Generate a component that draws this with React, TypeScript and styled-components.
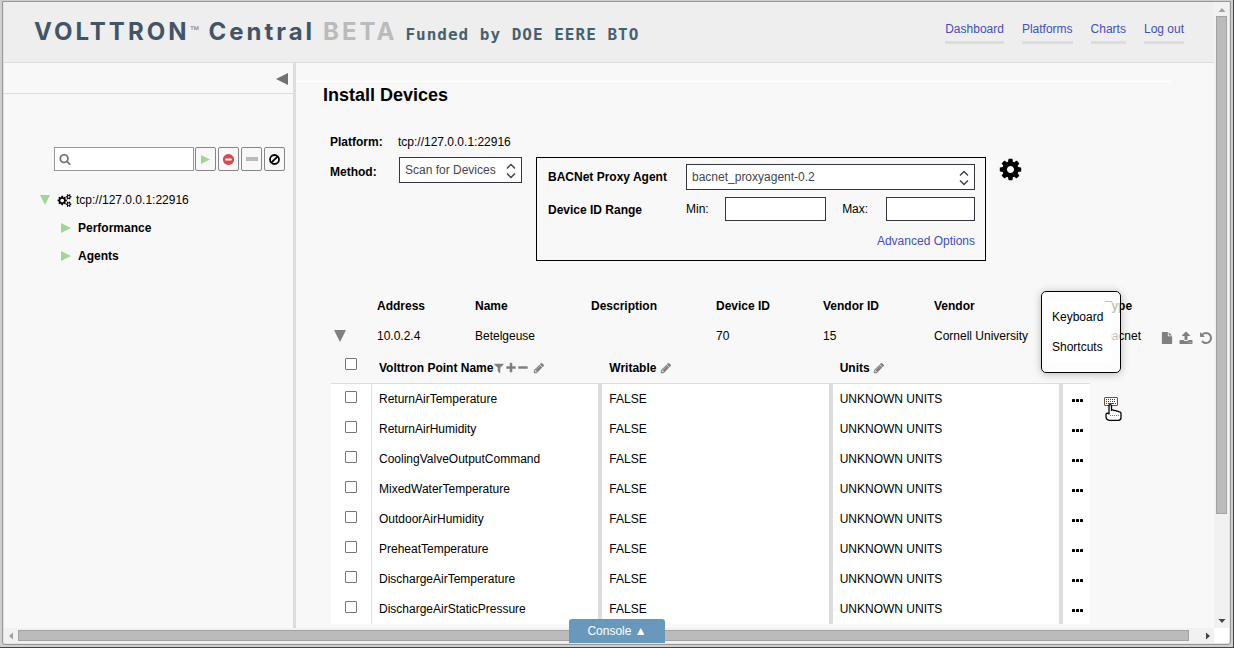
import React from "react";
import styled, { createGlobalStyle } from "styled-components";

const GlobalStyle = createGlobalStyle`
  * { box-sizing: border-box; }
  body {
    margin: 0;
    background: #f8f8f8;
    color: #000;
    font: 12px/20px "Liberation Sans", Arial, sans-serif;
  }
  button, input, select { font: inherit; color: inherit; }
  a { color: #424fbf; text-decoration: none; }
`;

/* ---------- window frame and scroll bars ---------- */

const WindowFrame = styled.div`
  height: 100vh;
  padding: 1px 2px 2px;
  background: #cfcfcf;
  border: solid #444;
  border-width: 0 1px 1px 0;
`;

const WindowBody = styled.div`
  height: 100%;
  display: grid;
  grid-template-columns: minmax(0, 1fr) 15px;
  grid-template-rows: minmax(0, 1fr) 15px;
  padding: 0 1px 1px;
  background: #e4e4e4;
  border: 1px solid #979797;
  border-radius: 0 0 3px 3px;
`;

const Page = styled.div`
  display: flex;
  flex-direction: column;
  overflow: hidden;
  background: #f8f8f8;
`;

const ScrollTrack = styled.div<{ $vertical?: boolean }>`
  display: flex;
  flex-direction: ${(p) => (p.$vertical ? "column" : "row")};
  align-items: center;
  background: #f1f1f1;
`;

const ScrollThumb = styled.div<{ $vertical?: boolean; $length: string }>`
  flex: 0 0 ${(p) => p.$length};
  ${(p) => (p.$vertical ? "width" : "height")}: 11px;
  background: #bbb;
  border: 1px solid #a3a3a3;
`;

const ScrollArrow = styled.svg`
  flex: none;
  width: 14px;
  height: 14px;
  padding: 3px;
`;

const ScrollSpace = styled.div`
  flex: 1;
`;

const ScrollCorner = styled.div`
  background: #fff;
`;

/* ---------- header ---------- */

const Header = styled.header`
  flex: none;
  height: 61px;
  display: flex;
  justify-content: space-between;
  padding: 16px 30px 0;
  background: #eee;
  border-bottom: 1px solid #ddd;
`;

const Brand = styled.h1`
  display: flex;
  align-items: baseline;
  margin: 0;
  font: bold 24px/28px Inter, "Open Sans", sans-serif;
  letter-spacing: 3px;
  color: #435466;
  white-space: nowrap;
`;

const TradeMark = styled.sup`
  align-self: flex-start;
  width: 19px;
  font: 10px/24px "Liberation Sans", sans-serif;
  letter-spacing: 0;
  color: #777;
`;

const Beta = styled.span`
  margin: 0 8px;
  color: #bbb;
`;

const Funding = styled.span`
  font: bold 16px/20px "DejaVu Sans Mono", monospace;
  letter-spacing: 1px;
  color: #47616c;
`;

const Nav = styled.nav`
  display: flex;
  align-items: flex-start;
  gap: 18px;
`;

const NavLink = styled.a`
  padding: 1px 0 2px;
  border-bottom: 3px solid #ddd;
`;

/* ---------- side panel ---------- */

const Columns = styled.div`
  flex: 1;
  min-height: 0;
  display: flex;
`;

const SidePanel = styled.aside`
  flex: 0 0 292px;
  min-width: 0;
  border-right: 3px solid #ddd;
`;

const PanelBar = styled.div`
  height: 31px;
  display: flex;
  justify-content: flex-end;
  align-items: center;
  padding: 2px 5px 0 0;
  border-bottom: 1px solid #ddd;
`;

const IconButton = styled.button<{ $color?: string }>`
  display: inline-flex;
  align-items: center;
  justify-content: center;
  padding: 0;
  border: 0;
  background: none;
  vertical-align: middle;
  color: ${(p) => p.$color ?? "#808080"};
`;

const FilterRow = styled.div`
  display: flex;
  gap: 2px;
  margin-top: 53px;
  padding: 0 8px 0 50px;
`;

const SearchField = styled.label`
  flex: 1;
  min-width: 0;
  display: flex;
  align-items: center;
  height: 24px;
  padding-left: 4px;
  margin-right: -1px;
  background: #fff;
  border: 1px solid #999;
  color: #777;
`;

const SearchInput = styled.input`
  flex: 1;
  width: 100%;
  min-width: 0;
  height: 20px;
  border: 0;
  outline: 0;
  background: none;
`;

const FilterButton = styled(IconButton)`
  flex: none;
  width: 21px;
  height: 24px;
  border: 1px solid #858585;
  border-radius: 2px;
`;

const Tree = styled.ul`
  list-style: none;
  margin: 15px 0 0;
  padding: 0 0 0 36px;
  line-height: 28px;
`;

const Branch = styled.ul`
  list-style: none;
  margin: 0;
  padding: 0 0 0 21px;
  font-weight: bold;
`;

const TreeRow = styled.div<{ $gap: number }>`
  display: flex;
  align-items: center;
  gap: ${(p) => p.$gap}px;
`;

const PlatformName = styled.span`
  display: flex;
  align-items: center;
  gap: 5px;
`;

/* ---------- main panel ---------- */

const Main = styled.main`
  flex: 1;
  min-width: 0;
`;

const Rule = styled.hr`
  height: 1px;
  margin: 18px 43px 1px 0;
  border: 0;
  background: #fff;
`;

const Title = styled.h2`
  margin: 0 27px;
  font-size: 18px;
  line-height: 24px;
`;

const SetupForm = styled.form`
  margin: 20px 34px 30px;
`;

const SetupRow = styled.div`
  display: flex;
  align-items: flex-start;
  line-height: 30px;
`;

const SetupLabel = styled.label`
  flex: 0 0 69px;
  font-weight: bold;
`;

const SetupValue = styled.span`
  margin-left: -1px;
`;

const SelectWrap = styled.span<{ $width: string }>`
  position: relative;
  flex: none;
  display: block;
  width: ${(p) => p.$width};
  height: 26px;
`;

const Select = styled.select`
  display: block;
  width: 100%;
  height: 26px;
  padding: 0 24px 1px 5px;
  appearance: none;
  background: #fff;
  border: 1px solid #33363f;
  border-radius: 0;
  line-height: 20px;
  color: #43464f;
`;

const SelectArrows = styled.svg`
  position: absolute;
  right: 6px;
  top: 6px;
  pointer-events: none;
`;

const ProxyBox = styled.fieldset`
  flex: 0 1 450px;
  min-width: 0;
  display: grid;
  grid-template-columns: 138px minmax(0, 1fr);
  grid-template-rows: 26px 24px 20px;
  row-gap: 7px;
  margin: 0 12px 0 14px;
  padding: 6px 10px 12px 11px;
  border: 1px solid #000;
  line-height: 26px;
`;

const StrongLabel = styled.label`
  font-weight: bold;
`;

const RangeFields = styled.div`
  display: flex;
  line-height: 24px;
`;

const RangeLabel = styled.label<{ $width: number }>`
  flex: 0 0 ${(p) => p.$width}px;
`;

const RangeInput = styled.input`
  flex: 1 1 94px;
  min-width: 0;
  height: 24px;
  border: 1px solid #33363f;
  background: #fff;
  &:first-of-type { flex-basis: 107px; margin-right: 16px; }
`;

const AdvancedLink = styled.a`
  grid-column: 2;
  justify-self: end;
`;

const DeviceTable = styled.table`
  width: calc(100% - 35px);
  margin-left: 35px;
  table-layout: fixed;
  border-spacing: 0;
  text-align: left;
  white-space: nowrap;
  th, td { height: 30px; padding: 0; }
`;

const DeviceToggle = styled.div`
  display: flex;
  padding-left: 3px;
`;

const DeviceActions = styled.div`
  display: flex;
  gap: 6px;
  margin-left: -1px;
  padding-top: 3px;
`;

const PointsArea = styled.div`
  display: flex;
  padding-left: 35px;
`;

const PointsTable = styled.table`
  flex: 1;
  width: 100%;
  min-width: 0;
  table-layout: fixed;
  border-spacing: 0;
  text-align: left;
  white-space: nowrap;
`;

const HeadCell = styled.th`
  height: 33px;
  padding: 1px 7px 0;
  border-bottom: 1px solid #ddd;
`;

const HeadContent = styled.div`
  display: flex;
  align-items: center;
`;

const Cell = styled.td<{ $divider?: number }>`
  height: 30px;
  padding: 0 7px;
  background: #fff;
  border-right: ${(p) => p.$divider ?? 0}px solid #ddd;
`;

const Checkbox = styled.input`
  display: block;
  width: 12px;
  height: 12px;
  margin: 0 0 4px 7px;
  appearance: none;
  background: #fff;
  border: 1px solid #767676;
  border-radius: 1px;
  th > & { margin-bottom: 8px; }
  &:checked { background: #555; }
`;

const ShortcutArea = styled.div`
  flex: 0 0 124px;
  padding: 46px 0 0 14px;
`;

const ShortcutAnchor = styled.div`
  position: relative;
  width: 14px;
  height: 9px;
  display: flex;
`;

const Tooltip = styled.div`
  position: absolute;
  left: -63px;
  top: -106px;
  width: 80px;
  padding: 10px 9px;
  background: rgba(255, 255, 255, 0.75);
  border: 1px solid #000;
  border-radius: 5px;
  box-shadow: 0 1px 8px rgba(0, 0, 0, 0.25);
`;

const TooltipText = styled.p`
  margin: 0;
  padding-left: 1px;
  line-height: 30px;
  background: #fff;
`;

const Pointer = styled.svg`
  position: absolute;
  left: 1px;
  top: 7px;
`;

const ConsoleButton = styled.button`
  position: fixed;
  left: 50%;
  bottom: 5px;
  width: 96px;
  height: 24px;
  margin-left: -48px;
  padding: 0;
  border: 0;
  border-radius: 3px 3px 0 0;
  background: #6899bd;
  color: #fff;
  text-align: center;
`;

/* ---------- icons ---------- */

const shapes = {
  cogs: "M832 896q0-106-75-181t-181-75-181 75-75 181 75 181 181 75 181-75 75-181zm768 512q0-52-38-90t-90-38-90 38-38 90q0 53 37.5 90.5t90.5 37.5 90.5-37.5 37.5-90.5zm0-1024q0-52-38-90t-90-38-90 38-38 90q0 53 37.5 90.5t90.5 37.5 90.5-37.5 37.5-90.5zm-384 421v185q0 10-7 19.5t-16 10.5l-155 24q-11 35-32 76 34 48 90 115 7 11 7 20 0 12-7 19-23 30-82.5 89.5t-78.5 59.5q-11 0-21-7l-115-90q-37 19-77 31-11 108-23 155-7 24-30 24h-186q-11 0-20-7.5t-10-17.5l-23-153q-34-10-75-31l-118 89q-7 7-20 7-11 0-21-8-144-133-144-160 0-9 7-19 10-14 41-53t47-61q-23-44-35-82l-152-24q-10-1-17-9.5t-7-19.5v-185q0-10 7-19.5t16-10.5l155-24q11-35 32-76-34-48-90-115-7-11-7-20 0-12 7-20 22-30 82-89t79-59q11 0 21 7l115 90q34-18 77-32 11-108 23-154 7-24 30-24h186q11 0 20 7.5t10 17.5l23 153q34 10 75 31l118-89q8-7 20-7 11 0 21 8 144 133 144 160 0 8-7 19-12 16-42 54t-45 60q23 48 34 82l152 23q10 2 17 10.5t7 19.5zm640 533v140q0 16-149 31-12 27-30 52 51 113 51 138 0 4-4 7-122 71-124 71-8 0-46-47t-52-68q-20 2-30 2t-30-2q-14 21-52 68t-46 47q-2 0-124-71-4-3-4-7 0-25 51-138-18-25-30-52-149-15-149-31v-140q0-16 149-31 13-29 30-52-51-113-51-138 0-4 4-7 4-2 35-20t59-34 30-16q8 0 46 46.5t52 67.5q20-2 30-2t30 2q51-71 92-112l6-2q4 0 124 70 4 3 4 7 0 25-51 138 17 23 30 52 149 15 149 31zm0-1024v140q0 16-149 31-12 27-30 52 51 113 51 138 0 4-4 7-122 71-124 71-8 0-46-47t-52-68q-20 2-30 2t-30-2q-14 21-52 68t-46 47q-2 0-124-71-4-3-4-7 0-25 51-138-18-25-30-52-149-15-149-31v-140q0-16 149-31 13-29 30-52-51-113-51-138 0-4 4-7 4-2 35-20t59-34 30-16q8 0 46 46.5t52 67.5q20-2 30-2t30 2q51-71 92-112l6-2q4 0 124 70 4 3 4 7 0 25-51 138 17 23 30 52 149 15 149 31z",
  cog: "M1152 896q0-106-75-181t-181-75-181 75-75 181 75 181 181 75 181-75 75-181zm512-109v222q0 12-8 23t-20 13l-185 28q-19 54-39 91 35 50 107 138 10 12 10 25t-9 23q-27 37-99 108t-94 71q-12 0-26-9l-138-108q-44 23-91 38-16 136-29 186-7 28-36 28h-222q-14 0-24.5-8.5t-11.5-21.5l-28-184q-49-16-90-37l-141 107q-10 9-25 9-14 0-25-11-126-114-165-168-7-10-7-23 0-12 8-23 15-21 51-66.5t54-70.5q-27-50-41-99l-183-27q-13-2-21-12.5t-8-23.5v-222q0-12 8-23t19-13l186-28q14-46 39-92-40-57-107-138-10-12-10-24 0-10 9-23 26-36 98.5-107.5t94.5-71.5q13 0 26 10l138 107q44-23 91-38 16-136 29-186 7-28 36-28h222q14 0 24.5 8.5t11.5 21.5l28 184q49 16 90 37l142-107q9-9 24-9 13 0 25 10 129 119 165 170 7 8 7 22 0 12-8 23-15 21-51 66.5t-54 70.5q26 50 41 98l183 28q13 2 21 12.5t8 23.5z",
  filter: "M1595 295q17 41-14 70l-493 493v742q0 42-39 59-13 5-25 5-27 0-45-19l-256-256q-19-19-19-45v-486l-493-493q-31-29-14-70 17-39 59-39h1280q42 0 59 39z",
  plus: "M1600 736v192q0 40-28 68t-68 28h-416v416q0 40-28 68t-68 28h-192q-40 0-68-28t-28-68v-416h-416q-40 0-68-28t-28-68v-192q0-40 28-68t68-28h416v-416q0-40 28-68t68-28h192q40 0 68 28t28 68v416h416q40 0 68 28t28 68z",
  minus: "M1600 736v192q0 40-28 68t-68 28h-1216q-40 0-68-28t-28-68v-192q0-40 28-68t68-28h1216q40 0 68 28t28 68z",
  pencil: "M491 1536l91-91-235-235-91 91v107h128v128h107zm523-928q0-22-22-22-10 0-17 7l-542 542q-7 7-7 17 0 22 22 22 10 0 17-7l542-542q7-7 7-17zm-54-192l416 416-832 832h-416v-416zm683 96q0 53-37 90l-166 166-416-416 166-165q36-38 90-38 53 0 91 38l235 234q37 39 37 91z",
  search: "M1216 832q0-185-131.5-316.5t-316.5-131.5-316.5 131.5-131.5 316.5 131.5 316.5 316.5 131.5 316.5-131.5 131.5-316.5zm512 832q0 52-38 90t-90 38q-54 0-90-38l-343-342q-179 124-399 124-143 0-273.5-55.5t-225-150-150-225-55.5-273.5 55.5-273.5 150-225 225-150 273.5-55.5 273.5 55.5 225 150 150 225 55.5 273.5q0 220-124 399l343 343q37 37 37 90z",
  upload: "M1344 1472q0-26-19-45t-45-19-45 19-19 45 19 45 45 19 45-19 19-45zm256 0q0-26-19-45t-45-19-45 19-19 45 19 45 45 19 45-19 19-45zm128-224v320q0 40-28 68t-68 28h-1472q-40 0-68-28t-28-68v-320q0-40 28-68t68-28h427q21 56 70.5 92t110.5 36h256q61 0 110.5-36t70.5-92h427q40 0 68 28t28 68zm-325-648q-17 40-59 40h-256v448q0 26-19 45t-45 19h-256q-26 0-45-19t-19-45v-448h-256q-42 0-59-40-17-39 14-69l448-448q18-19 45-19t45 19l448 448q31 30 14 69z",
  undo: "M1664 896q0 156-61 298t-164 245-245 164-298 61q-172 0-327-72.5t-264-204.5q-7-10-6.5-22.5t8.5-20.5l137-138q10-9 25-9 16 2 23 12 73 95 179 147t225 52q104 0 198.5-40.5t163.5-109.5 109.5-163.5 40.5-198.5-40.5-198.5-109.5-163.5-163.5-109.5-198.5-40.5q-98 0-188 35.5t-160 101.5l137 138q31 30 14 69-17 40-59 40h-448q-26 0-45-19t-19-45v-448q0-42 40-59 39-17 69 14l130 129q107-101 244.5-156.5t284.5-55.5q156 0 298 61t245 164 164 245 61 298z",
  file: "M1152 512v-472q22 14 36 28l408 408q14 14 28 36h-472zm-128 32q0 40 28 68t68 28h544v1056q0 40-28 68t-68 28h-1344q-40 0-68-28t-28-68v-1600q0-40 28-68t68-28h800v544z",
  stop: "M1344 960v-128q0-26-19-45t-45-19h-768q-26 0-45 19t-19 45v128q0 26 19 45t45 19h768q26 0 45-19t19-45zm320-64q0 209-103 385.5t-279.5 279.5-385.5 103-385.5-103-279.5-279.5-103-385.5 103-385.5 279.5-279.5 385.5-103 385.5 103 279.5 279.5 103 385.5z",
};

function Icon({ name, size = 14 }: { name: keyof typeof shapes; size?: number }) {
  return (
    <svg width={size} height={size} viewBox="0 0 1792 1792" overflow="visible" fill="currentColor" aria-hidden="true">
      <path d={shapes[name]} />
    </svg>
  );
}

const directions = {
  right: "0,0 10,5 0,10",
  down: "0,0 10,0 5,10",
  left: "10,0 10,10 0,5",
};

function Triangle({ to, size = 10 }: { to: keyof typeof directions; size?: number }) {
  return (
    <svg width={size} height={size} viewBox="0 0 10 10" fill="currentColor" aria-hidden="true">
      <polygon points={directions[to]} />
    </svg>
  );
}

function Picker({ id, width, value }: { id: string; width: string; value: string }) {
  return (
    <SelectWrap $width={width}>
      <Select id={id} defaultValue={value}>
        <option>{value}</option>
      </Select>
      <SelectArrows width="10" height="16" fill="none" stroke="#3c3f46" strokeWidth="1.4">
        <path d="M1 5.5L5 1.5L9 5.5M1 10.5L5 14.5L9 10.5" />
      </SelectArrows>
    </SelectWrap>
  );
}

const GREEN = "#9ed893";

const points = [
  "ReturnAirTemperature",
  "ReturnAirHumidity",
  "CoolingValveOutputCommand",
  "MixedWaterTemperature",
  "OutdoorAirHumidity",
  "PreheatTemperature",
  "DischargeAirTemperature",
  "DischargeAirStaticPressure",
];

function Sidebar() {
  return (
    <SidePanel>
      <PanelBar>
        <IconButton aria-label="Collapse panel" $color="#707070"><Triangle to="left" size={12} /></IconButton>
      </PanelBar>
      <FilterRow>
        <SearchField>
          <Icon name="search" size={12} />
          <SearchInput aria-label="Search" />
        </SearchField>
        <FilterButton aria-label="Running" $color={GREEN}><Triangle to="right" size={9} /></FilterButton>
        <FilterButton aria-label="Stopped" $color="#d04b55"><Icon name="stop" size={13} /></FilterButton>
        <FilterButton aria-label="Unknown" $color="#bbb">
          <svg width="12" height="4" fill="currentColor"><rect width="12" height="4" /></svg>
        </FilterButton>
        <FilterButton aria-label="Clear filter" $color="#000">
          <svg width="11" height="11" fill="none" stroke="currentColor" strokeWidth="1.8">
            <circle cx="5.5" cy="5.5" r="4.5" />
            <path d="M2.3 8.7L8.7 2.3" />
          </svg>
        </FilterButton>
      </FilterRow>
      <Tree>
        <li>
          <TreeRow $gap={8}>
            <IconButton aria-label="Collapse platform" $color={GREEN}><Triangle to="down" /></IconButton>
            <PlatformName><Icon name="cogs" size={13} />tcp://127.0.0.1:22916</PlatformName>
          </TreeRow>
          <Branch>
            {["Performance", "Agents"].map((name) => (
              <li key={name}>
                <TreeRow $gap={7}>
                  <IconButton aria-label={`Expand ${name}`} $color={GREEN}><Triangle to="right" /></IconButton>
                  {name}
                </TreeRow>
              </li>
            ))}
          </Branch>
        </li>
      </Tree>
    </SidePanel>
  );
}

function DeviceSetup() {
  return (
    <SetupForm>
      <SetupRow>
        <SetupLabel as="span">Platform:</SetupLabel>
        <SetupValue>tcp://127.0.0.1:22916</SetupValue>
      </SetupRow>
      <SetupRow>
        <SetupLabel htmlFor="method">Method:</SetupLabel>
        <Picker id="method" width="123px" value="Scan for Devices" />
        <ProxyBox>
          <StrongLabel htmlFor="proxy">BACNet Proxy Agent</StrongLabel>
          <Picker id="proxy" width="100%" value="bacnet_proxyagent-0.2" />
          <StrongLabel as="span">Device ID Range</StrongLabel>
          <RangeFields>
            <RangeLabel htmlFor="min" $width={39}>Min:</RangeLabel>
            <RangeInput id="min" />
            <RangeLabel htmlFor="max" $width={44}>Max:</RangeLabel>
            <RangeInput id="max" />
          </RangeFields>
          <AdvancedLink href="#advanced">Advanced Options</AdvancedLink>
        </ProxyBox>
        <IconButton type="button" aria-label="Settings" $color="#000"><Icon name="cog" size={25} /></IconButton>
      </SetupRow>
    </SetupForm>
  );
}

function Devices() {
  return (
    <DeviceTable>
      <colgroup>
        {[46, 98, 116, 125, 107, 111].map((w) => <col key={w} width={w} />)}
        <col />
        <col width={57} />
        <col width={52} />
      </colgroup>
      <thead>
        <tr>
          <th />
          <th>Address</th><th>Name</th><th>Description</th><th>Device ID</th>
          <th>Vendor ID</th><th>Vendor</th><th>Type</th><th />
        </tr>
      </thead>
      <tbody>
        <tr>
          <td>
            <DeviceToggle>
              <IconButton aria-label="Collapse device"><Triangle to="down" size={12} /></IconButton>
            </DeviceToggle>
          </td>
          <td>10.0.2.4</td><td>Betelgeuse</td><td /><td>70</td>
          <td>15</td><td>Cornell University</td><td>bacnet</td>
          <td>
            <DeviceActions>
              <IconButton aria-label="Load file"><Icon name="file" size={12} /></IconButton>
              <IconButton aria-label="Upload"><Icon name="upload" /></IconButton>
              <IconButton aria-label="Reload"><Icon name="undo" /></IconButton>
            </DeviceActions>
          </td>
        </tr>
      </tbody>
    </DeviceTable>
  );
}

function Points() {
  return (
    <PointsArea>
      <PointsTable>
        <colgroup>
          <col width={41} /><col /><col /><col /><col width={27} />
        </colgroup>
        <thead>
          <tr>
            <HeadCell><Checkbox type="checkbox" aria-label="Select all" /></HeadCell>
            <HeadCell>
              <HeadContent>
                Volttron Point Name
                <IconButton aria-label="Filter points"><Icon name="filter" size={12} /></IconButton>
                <IconButton aria-label="Add point"><Icon name="plus" size={12} /></IconButton>
                <IconButton aria-label="Remove points"><Icon name="minus" size={12} /></IconButton>
                &nbsp;
                <IconButton aria-label="Edit names"><Icon name="pencil" size={12} /></IconButton>
              </HeadContent>
            </HeadCell>
            {["Writable", "Units"].map((name) => (
              <HeadCell key={name}>
                <HeadContent>
                  {name}&nbsp;
                  <IconButton aria-label={`Edit ${name}`}><Icon name="pencil" size={12} /></IconButton>
                </HeadContent>
              </HeadCell>
            ))}
            <HeadCell />
          </tr>
        </thead>
        <tbody>
          {points.map((name) => (
            <tr key={name}>
              <Cell $divider={1}><Checkbox type="checkbox" aria-label={name} /></Cell>
              <Cell $divider={4}>{name}</Cell>
              <Cell $divider={4}>FALSE</Cell>
              <Cell $divider={4}>UNKNOWN UNITS</Cell>
              <Cell>
                <IconButton aria-label={`Edit ${name}`} $color="#000">
                  <svg width="15" height="10" fill="currentColor">
                    <rect x="2" y="4" width="3" height="3" rx="0.6" />
                    <rect x="6" y="4" width="3" height="3" rx="0.6" />
                    <rect x="10" y="4" width="3" height="3" rx="0.6" />
                  </svg>
                </IconButton>
              </Cell>
            </tr>
          ))}
        </tbody>
      </PointsTable>
      <ShortcutArea>
        <ShortcutAnchor>
          <IconButton aria-label="Keyboard shortcuts" aria-describedby="shortcut-tip" $color="#444">
            <svg width="14" height="9" fill="none" stroke="currentColor">
              <rect x="0.5" y="0.5" width="13" height="8" rx="0.5" fill="#fff" stroke="#70503c" />
              <path d="M2 2.5H12M2 4.5H12" strokeDasharray="1 1" />
              <path d="M2 6.5H3M4 6.5H10M11 6.5H12" />
            </svg>
          </IconButton>
          <Tooltip role="tooltip" id="shortcut-tip">
            <TooltipText>Keyboard Shortcuts</TooltipText>
          </Tooltip>
          <Pointer width="17" height="18" viewBox="0 0 17 18" aria-hidden="true">
            <path
              d="M4 2Q4 .7 5.2 .7T6.5 2V6.2Q8 5.4 9 6.6Q10.6 6 11.5 7.2Q13 6.7 14 7.9Q16 7.6 16 9.6V13.5Q16 16.3 13.4 16.3H4.5Q1 16 1 12.5V10.5Q1 9.2 2.5 9.2Q3.6 9.3 4 10.3Z"
              fill="#fff" stroke="#000" strokeWidth="1.3"
            />
            <path d="M5 11.5H14" stroke="#777" strokeDasharray="1 1" />
          </Pointer>
        </ShortcutAnchor>
      </ShortcutArea>
    </PointsArea>
  );
}

export default function App() {
  return (
    <WindowFrame>
      <GlobalStyle />
      <WindowBody>
        <Page>
          <Header>
            <Brand>
              VOLTTRON<TradeMark>™</TradeMark>
              Central<Beta>BETA</Beta>
              <Funding>Funded by DOE EERE BTO</Funding>
            </Brand>
            <Nav>
              {["Dashboard", "Platforms", "Charts", "Log out"].map((name) => (
                <NavLink key={name} href={`#${name}`}>{name}</NavLink>
              ))}
            </Nav>
          </Header>
          <Columns>
            <Sidebar />
            <Main>
              <Rule />
              <Title>Install Devices</Title>
              <DeviceSetup />
              <Devices />
              <Points />
            </Main>
          </Columns>
        </Page>
        <ScrollTrack $vertical aria-hidden="true">
          <ScrollArrow viewBox="0 0 8 8"><path d="M0.5 7L4 3L7.5 7Z" fill="#a0a0a0" /></ScrollArrow>
          <ScrollThumb $vertical $length="79.5%" />
          <ScrollSpace />
          <ScrollArrow viewBox="0 0 8 8"><path d="M0.5 2L4 6L7.5 2Z" fill="#444" /></ScrollArrow>
        </ScrollTrack>
        <ScrollTrack aria-hidden="true">
          <ScrollArrow viewBox="0 0 8 8"><path d="M6 0.5L2 4L6 7.5Z" fill="#a0a0a0" /></ScrollArrow>
          <ScrollThumb $length="96.8%" />
          <ScrollSpace />
          <ScrollArrow viewBox="0 0 8 8"><path d="M3 0.5L7 4L3 7.5Z" fill="#444" /></ScrollArrow>
        </ScrollTrack>
        <ScrollCorner />
      </WindowBody>
      <ConsoleButton>Console ▲</ConsoleButton>
    </WindowFrame>
  );
}
